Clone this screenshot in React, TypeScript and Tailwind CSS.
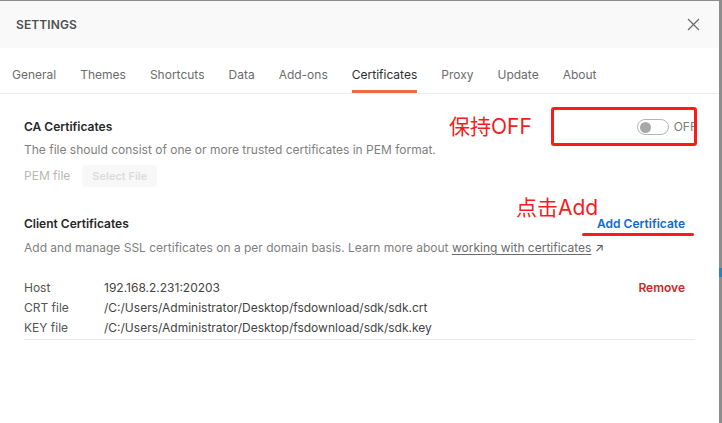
import { useState } from "react";

const tabs = [
  "General",
  "Themes",
  "Shortcuts",
  "Data",
  "Add-ons",
  "Certificates",
  "Proxy",
  "Update",
  "About",
];

const certRows = [
  { label: "Host", value: "192.168.2.231:20203" },
  { label: "CRT file", value: "/C:/Users/Administrator/Desktop/fsdownload/sdk/sdk.crt" },
  { label: "KEY file", value: "/C:/Users/Administrator/Desktop/fsdownload/sdk/sdk.key" },
];

export default function App() {
  const [active] = useState("Certificates");

  return (
    <div
      className="relative w-[722px] h-[423px] overflow-hidden bg-[#8d8d8d] pt-px pr-[3px] flex"
      style={{ fontFamily: "Inter, 'Noto Sans', 'Noto Sans CJK SC', sans-serif" }}
    >
      <div className="flex-1 bg-white flex flex-col">
        {/* Header */}
        <div className="h-[47px] bg-[#f9f9f9] pl-4 pr-[19px] flex items-center justify-between">
          <span className="text-[12px] font-semibold text-[#505050] tracking-[0.1px]">
            SETTINGS
          </span>
          <svg width="13" height="13" viewBox="0 0 13 13" className="text-[#6b6b6b]">
            <path d="M1 1L12 12M12 1L1 12" stroke="currentColor" strokeWidth="1.2" />
          </svg>
        </div>

        {/* Tabs */}
        <div className="h-[46px] flex border-b border-[#ececec]">
          {tabs.map((t) => (
            <div
              key={t}
              className={`px-3 flex flex-col justify-end ${
                t === active ? "text-[#2e2e2e]" : "text-[#6b6b6b]"
              }`}
            >
              <span className="text-[12px] leading-[20px] mb-[5px]">{t}</span>
              <div className={`h-[3px] ${t === active ? "bg-[#f26b3a]" : "bg-transparent"}`} />
            </div>
          ))}
        </div>

        {/* Body */}
        <div className="px-6 pt-[23px]">
          <div className="flex items-center justify-between h-5">
            <span className="text-[12px] font-semibold text-[#282828]">CA Certificates</span>
            <div className="flex items-center gap-[5px] -mr-0.5">
              <div className="w-[32px] h-[16px] rounded-full border border-[#b5b5b5] flex items-center px-[2px]">
                <div className="w-[11px] h-[11px] rounded-full bg-[#a8a8a8]" />
              </div>
              <span className="text-[12px] text-[#7a7a7a]">OFF</span>
            </div>
          </div>
          <p className="mt-[3px] text-[12px] leading-5 text-[#808080]">
            The file should consist of one or more trusted certificates in PEM format.
          </p>
          <div className="mt-[5px] flex items-center gap-3 h-[22px]">
            <span className="text-[12px] text-[#b8b8b8]">PEM file</span>
            <div className="h-[22px] px-[10px] flex items-center rounded bg-[#f8f8f8] text-[11px] font-semibold text-[#dcdcdc]">
              Select File
            </div>
          </div>

          <div className="mt-[27px] flex items-center justify-between h-5">
            <span className="text-[12px] font-semibold text-[#282828]">Client Certificates</span>
            <span className="pr-[10px] text-[12px] font-semibold text-[#0b6ad3]">
              Add Certificate
            </span>
          </div>
          <p className="mt-1 text-[12px] leading-5 text-[#808080]">
            Add and manage SSL certificates on a per domain basis. Learn more about{" "}
            <span className="underline underline-offset-2 text-[#6b6b6b]">
              working with certificates
            </span>{" "}
            <span className="text-[#555]">↗</span>
          </p>

          <div className="mt-5 pb-[2px] border-b border-[#e8e8e8]">
            {certRows.map((r, i) => (
              <div
                key={r.label}
                className={`flex items-center text-[12px] ${i === 2 ? "h-[19px]" : "h-5"}`}
              >
                <span className="w-[80px] text-[#555]">{r.label}</span>
                <span className="flex-1 text-[#444]">{r.value}</span>
                {i === 0 && (
                  <span className="pr-[10px] text-[12px] font-semibold text-[#c62a24]">Remove</span>
                )}
              </div>
            ))}
          </div>
        </div>
      </div>

      {/* Annotations */}
      <span className="absolute left-[449px] top-[113px] text-[21px] leading-[28px] text-[#f41c1c]">
        保持OFF
      </span>
      <div className="absolute left-[551px] top-[107px] w-[146px] h-[39px] border-[3px] border-[#ff1a1a] rounded-[3px]" />
      <span className="absolute left-[516px] top-[194px] text-[21px] leading-[28px] text-[#f41c1c]">
        点击Add
      </span>
      <div className="absolute left-[582px] top-[233px] w-[112px] h-[3px] rounded-full bg-[#ff1a1a]" />
      <div className="absolute left-[719px] top-[268px] w-[3px] h-[9px] bg-[#3a7ea8]" />
    </div>
  );
}
